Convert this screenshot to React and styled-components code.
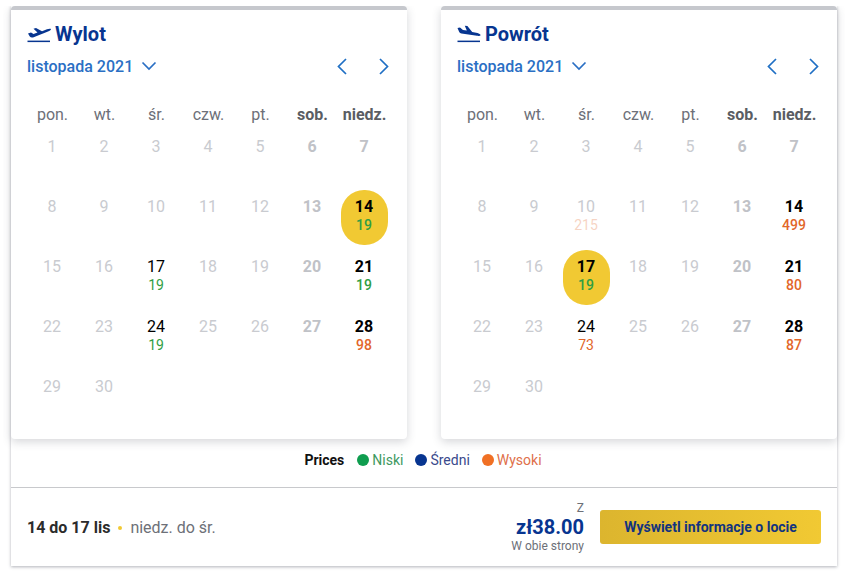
import React from 'react'
import styled, { createGlobalStyle } from 'styled-components'

const GlobalStyle = createGlobalStyle`
  html, body {
    margin: 0;
    padding: 0;
    background: #fff;
    font-family: Roboto, "Liberation Sans", sans-serif;
  }
`

const Page = styled.div`
  width: 852px;
  height: 580px;
  padding: 6px 15px 0 11px;
  box-sizing: border-box;
  overflow: hidden;
`

const Panel = styled.div`
  width: 826px;
  height: 560px;
  display: flex;
  flex-direction: column;
  background: #fff;
  box-shadow: 0 1px 3px rgba(60, 64, 80, 0.4);
  clip-path: inset(0 -8px -8px -8px);
`

const Calendars = styled.div`
  display: flex;
  justify-content: space-between;
  height: 433px;
`

const Card = styled.section`
  width: 396px;
  height: 433px;
  box-sizing: border-box;
  padding: 12px 17px 0 15px;
  border-top: 4px solid #c6c8cd;
  border-radius: 4px;
  background: #fff;
  box-shadow: 0 3px 10px rgba(50, 55, 70, 0.2);
`

const TitleRow = styled.div`
  display: flex;
  align-items: center;
  gap: 4px;
  height: 24px;
  margin-left: 1px;
`

const Title = styled.h2`
  margin: 0;
  font-size: 20px;
  line-height: 24px;
  font-weight: 700;
  color: #073590;
`

const MonthRow = styled.div`
  display: flex;
  align-items: center;
  justify-content: space-between;
  height: 24px;
  margin: 8px 1px 0 1px;
`

const Month = styled.div`
  display: flex;
  align-items: center;
  gap: 8px;
  font-size: 16px;
  font-weight: 500;
  color: #2a6fc4;
`

const Arrows = styled.div`
  display: flex;
  gap: 32px;
  color: #1f6fc4;
`

const Grid = styled.div`
  display: grid;
  grid-template-columns: repeat(7, 52px);
  margin-top: 21px;
`

const WeekDay = styled.div`
  height: 31px;
  line-height: 32px;
  padding-left: 1px;
  text-align: center;
  font-size: 16px;
  font-weight: ${(p) => (p.$weekend ? 700 : 400)};
  color: ${(p) => (p.$weekend ? '#5a5d63' : '#6d7078')};
`

const DayCell = styled.div`
  height: 60px;
  display: flex;
  justify-content: center;
  align-items: flex-start;
`

const Day = styled.div`
  width: 47px;
  height: 55px;
  box-sizing: border-box;
  padding-top: 7px;
  border-radius: 23px;
  text-align: center;
  background: ${(p) => (p.$selected ? '#f1c933' : 'transparent')};
`

const DayNum = styled.div`
  font-size: 16px;
  line-height: 20px;
  font-weight: ${(p) => (p.$bold ? 700 : 400)};
  color: ${(p) => (p.$active ? '#000' : p.$bold ? '#c0c2c7' : '#c9cbd0')};
`

const DayPrice = styled.div`
  font-size: 14px;
  line-height: 16px;
  font-weight: ${(p) => (p.$bold ? 500 : 400)};
  color: ${(p) => p.$color};
  opacity: ${(p) => (p.$faded ? 0.28 : 1)};
`

const Legend = styled.div`
  height: 48px;
  display: flex;
  align-items: center;
  justify-content: center;
  font-size: 14px;
  padding-right: 2px;
  padding-bottom: 6px;
  box-sizing: border-box;
`

const LegendLabel = styled.span`
  font-weight: 700;
  color: #111;
  margin-right: 13px;
`

const LegendItem = styled.span`
  display: flex;
  align-items: center;
  gap: 3px;
  margin-right: 12px;
  color: ${(p) => p.$text};

  &:last-child {
    margin-right: 0;
  }
`

const Dot = styled.i`
  width: 12px;
  height: 12px;
  border-radius: 50%;
  background: ${(p) => p.$color};
`

const Footer = styled.div`
  flex: 1;
  display: flex;
  align-items: center;
  justify-content: space-between;
  padding: 0 16px 0 16px;
  border-top: 1px solid #c8c9cc;
`

const Trip = styled.div`
  display: flex;
  align-items: center;
  font-size: 16px;
  padding-top: 1px;
`

const TripDates = styled.span`
  font-weight: 700;
  color: #2b2b2b;
`

const TripDot = styled.i`
  width: 4px;
  height: 4px;
  margin: 0 8px;
  border-radius: 50%;
  background: #f1c933;
`

const TripDays = styled.span`
  color: #6d7078;
`

const Checkout = styled.div`
  display: flex;
  align-items: center;
  gap: 16px;
`

const Price = styled.div`
  text-align: right;
`

const PriceFrom = styled.div`
  font-size: 12px;
  line-height: 14px;
  color: #6d7078;
`

const PriceValue = styled.div`
  font-size: 20px;
  line-height: 24px;
  font-weight: 700;
  color: #073590;
`

const PriceNote = styled.div`
  font-size: 12px;
  line-height: 14px;
  color: #6d7078;
`

const CtaButton = styled.button`
  width: 221px;
  height: 34px;
  padding: 0;
  border: 0;
  border-radius: 3px;
  background: linear-gradient(90deg, #dcb52e, #f1c933);
  font-family: inherit;
  font-size: 14px;
  font-weight: 700;
  color: #12337f;
`

const PlaneUp = () => (
  <svg width="24" height="18" viewBox="0 0 24 18" fill="#073590">
    <path d="M1 8.5 L4 7.6 L6.5 9 L10.5 7.6 L6.5 3.8 L9 3 L15 6.2 L20 4.2 C21.5 3.6 23.5 3.4 24 4 C24 5 22.5 6 21 6.6 L6 12.4 C4.6 12.8 3.5 12.4 2.8 11.4 Z" />
    <rect x="0.5" y="15.6" width="22.5" height="1.5" />
  </svg>
)

const PlaneDown = () => (
  <svg width="24" height="18" viewBox="0 0 24 18" fill="#073590">
    <path d="M0.5 3 L3 2.6 L6 5 L9.8 5.6 L7.8 0.8 L10.4 1 L15.2 7 L20.5 8 C22 8.4 23.6 9.4 23.6 10.2 C23.2 11 21.4 11 20 10.8 L4.5 8.4 C3.2 8.2 2.4 7.4 2 6.4 Z" />
    <rect x="0.5" y="15.6" width="22.5" height="1.5" />
  </svg>
)

const Chevron = ({ d, w, h }) => (
  <svg width={w} height={h} viewBox={`0 0 ${w} ${h}`} fill="none" stroke="currentColor" strokeWidth="1.7">
    <path d={d} />
  </svg>
)

const GREEN = '#2f9e44'
const ORANGE = '#e2672a'
const WEEK_DAYS = ['pon.', 'wt.', 'śr.', 'czw.', 'pt.', 'sob.', 'niedz.']

const outbound = {
  14: { price: '19', color: GREEN, selected: true },
  17: { price: '19', color: GREEN },
  21: { price: '19', color: GREEN },
  24: { price: '19', color: GREEN },
  28: { price: '98', color: ORANGE },
}

const inbound = {
  10: { price: '215', color: ORANGE, faded: true },
  14: { price: '499', color: ORANGE },
  17: { price: '19', color: GREEN, selected: true },
  21: { price: '80', color: ORANGE },
  24: { price: '73', color: ORANGE },
  28: { price: '87', color: ORANGE },
}

const days = Array.from({ length: 30 }, (_, i) => i + 1)

const Calendar = ({ title, icon, prices }) => (
  <Card>
    <TitleRow>
      {icon}
      <Title>{title}</Title>
    </TitleRow>
    <MonthRow>
      <Month>
        listopada 2021
        <Chevron w={16} h={10} d="M1.5 1.5 L8 8 L14.5 1.5" />
      </Month>
      <Arrows>
        <Chevron w={10} h={17} d="M9 1 L1.5 8.5 L9 16" />
        <Chevron w={10} h={17} d="M1 1 L8.5 8.5 L1 16" />
      </Arrows>
    </MonthRow>
    <Grid>
      {WEEK_DAYS.map((d, i) => (
        <WeekDay key={d} $weekend={i > 4}>{d}</WeekDay>
      ))}
      {days.map((n) => {
        const info = prices[n]
        const active = info && !info.faded
        const weekend = n % 7 === 6 || n % 7 === 0
        const strong = weekend || (info && info.selected)
        return (
          <DayCell key={n}>
            <Day $selected={info && info.selected}>
              <DayNum $active={active} $bold={strong}>{n}</DayNum>
              {info && <DayPrice $color={info.color} $faded={info.faded} $bold={strong}>{info.price}</DayPrice>}
            </Day>
          </DayCell>
        )
      })}
    </Grid>
  </Card>
)

export default function App() {
  return (
    <Page>
      <GlobalStyle />
      <Panel>
        <Calendars>
          <Calendar title="Wylot" icon={<PlaneUp />} prices={outbound} />
          <Calendar title="Powrót" icon={<PlaneDown />} prices={inbound} />
        </Calendars>
        <Legend>
          <LegendLabel>Prices</LegendLabel>
          <LegendItem $text="#3f9a62"><Dot $color="#0f9d4f" />Niski</LegendItem>
          <LegendItem $text="#3a4a8c"><Dot $color="#073590" />Średni</LegendItem>
          <LegendItem $text="#e0704a"><Dot $color="#f07024" />Wysoki</LegendItem>
        </Legend>
        <Footer>
          <Trip>
            <TripDates>14 do 17 lis</TripDates>
            <TripDot />
            <TripDays>niedz. do śr.</TripDays>
          </Trip>
          <Checkout>
            <Price>
              <PriceFrom>Z</PriceFrom>
              <PriceValue>zł38.00</PriceValue>
              <PriceNote>W obie strony</PriceNote>
            </Price>
            <CtaButton>Wyświetl informacje o locie</CtaButton>
          </Checkout>
        </Footer>
      </Panel>
    </Page>
  )
}
